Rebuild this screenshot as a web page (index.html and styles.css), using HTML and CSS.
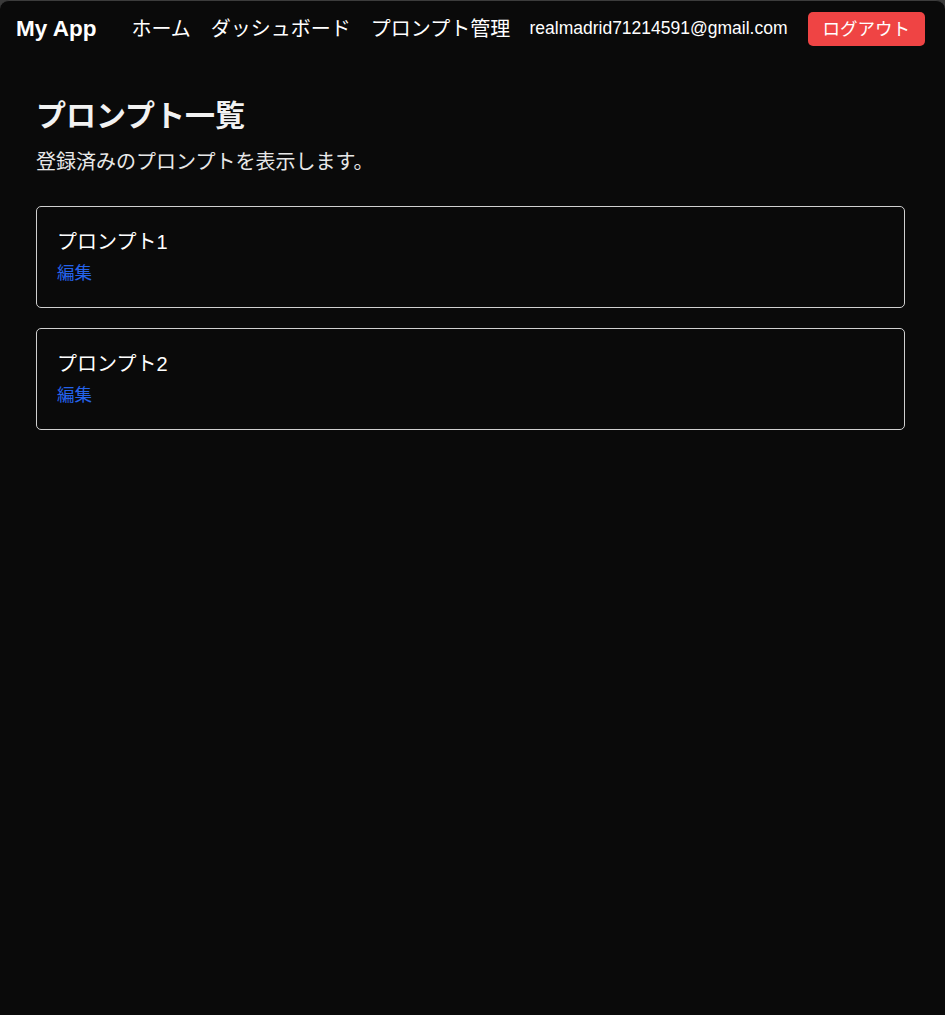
FILE: index.html
```html
<!DOCTYPE html>
<html lang="ja">
<head>
<meta charset="utf-8">
<title>My App</title>
<link rel="stylesheet" href="styles.css">
</head>
<body>
<div class="frame">
  <nav class="navbar">
    <div class="nav-left">
      <a class="brand" href="#">My App</a>
      <div class="nav-links">
        <a href="#">ホーム</a>
        <a href="#">ダッシュボード</a>
        <a href="#">プロンプト管理</a>
      </div>
    </div>
    <div class="nav-right">
      <span class="email">realmadrid71214591@gmail.com</span>
      <button class="logout">ログアウト</button>
    </div>
  </nav>
  <main class="main">
    <h1 class="title">プロンプト一覧</h1>
    <p class="subtitle">登録済みのプロンプトを表示します。</p>
    <ul class="list">
      <li class="card">
        <div class="card-title">プロンプト1</div>
        <a class="edit" href="#">編集</a>
      </li>
      <li class="card">
        <div class="card-title">プロンプト2</div>
        <a class="edit" href="#">編集</a>
      </li>
    </ul>
  </main>
</div>
</body>
</html>
```

FILE: styles.css
```css
html, body {
  margin: 0;
  padding: 0;
  background: #3a3a3a;
}
body {
  font-family: "Liberation Sans", "Noto Sans CJK JP", sans-serif;
  color: #ffffff;
}
.frame {
  background: #0a0a0a;
  min-height: 1014px;
  border-top: 1px solid #3c3c3c;
  border-radius: 9px 9px 0 0;
}
.navbar {
  height: 55px;
  display: flex;
  align-items: center;
  justify-content: space-between;
  padding: 0 20px 0 16px;
}
.nav-left {
  display: flex;
  align-items: center;
  gap: 35px;
}
.brand {
  font-size: 22.5px;
  font-weight: bold;
  color: #ffffff;
  text-decoration: none;
}
.nav-links {
  display: flex;
  gap: 20px;
}
.nav-links a {
  font-size: 20px;
  line-height: 30px;
  color: #ffffff;
  text-decoration: none;
}
.nav-right {
  display: flex;
  align-items: center;
  gap: 20px;
}
.email {
  font-size: 17.5px;
}
.logout {
  font-family: inherit;
  font-size: 17.5px;
  line-height: 24px;
  padding: 5px 15px;
  border: none;
  border-radius: 5px;
  background: #ef4444;
  color: #ffffff;
}
.main {
  padding: 40px 40px 36px 36px;
}
.title {
  margin: 0 0 11px;
  font-size: 30px;
  line-height: 40px;
  font-weight: bold;
  color: #f2f2f2;
}
.subtitle {
  margin: 0 0 29px;
  font-size: 20px;
  line-height: 30px;
  color: #e8e8e8;
}
.list {
  list-style: none;
  margin: 0;
  padding: 0;
  display: flex;
  flex-direction: column;
  gap: 20px;
}
.card {
  border: 1px solid #d0d0d0;
  border-radius: 5px;
  padding: 20px 20px 21px;
}
.card-title {
  font-size: 20px;
  line-height: 30px;
}
.edit {
  display: block;
  margin-top: 4px;
  font-size: 17.5px;
  line-height: 25px;
  color: #2563eb;
  text-decoration: none;
}
```
